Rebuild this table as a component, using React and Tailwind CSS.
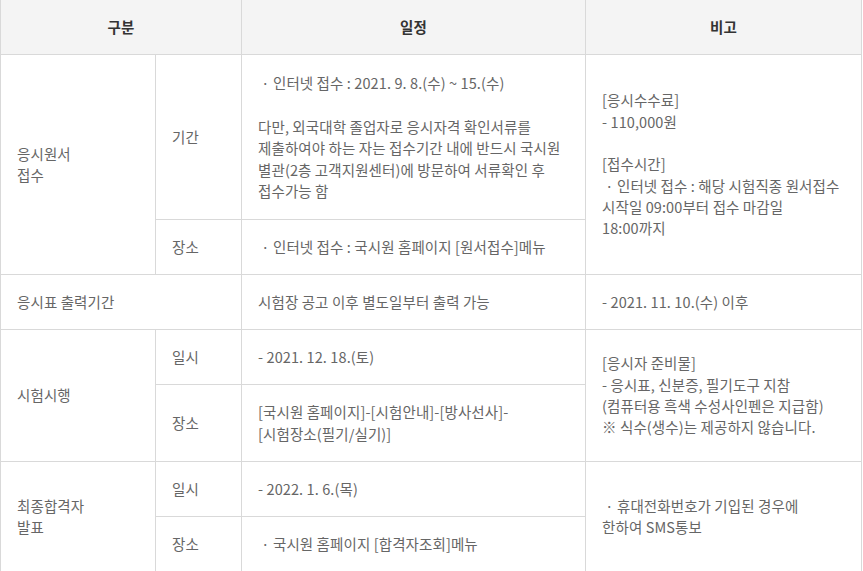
import React from "react";

const td = "border border-[#d9d9d9] px-4 align-middle text-left";

export default function App() {
  return (
    <div
      className="w-[863px] h-[571px] overflow-hidden bg-white text-[14.5px] leading-[21.33px] tracking-[0.1px] text-[#666]"
      style={{ fontFamily: '"Noto Sans CJK KR", "Noto Sans", sans-serif' }}
    >
      <table className="w-[861px] border-collapse table-fixed">
        <colgroup>
          <col className="w-[155px]" />
          <col className="w-[86px]" />
          <col className="w-[344px]" />
          <col className="w-[276px]" />
        </colgroup>
        <thead>
          <tr className="h-[54px] bg-[#f4f4f4]">
            <th colSpan={2} className="border border-[#d9d9d9] border-t-0 font-bold text-[#333] text-center">구분</th>
            <th className="border border-[#d9d9d9] border-t-0 font-bold text-[#333] text-center">일정</th>
            <th className="border border-[#d9d9d9] border-t-0 font-bold text-[#333] text-center">비고</th>
          </tr>
        </thead>
        <tbody>
          <tr className="h-[165px]">
            <td rowSpan={2} className={td}>
              응시원서
              <br />
              접수
            </td>
            <td className={td}>기간</td>
            <td className={td}>
              <p className="mb-[23px]">&nbsp;· 인터넷 접수 : 2021. 9. 8.(수) ~ 15.(수)</p>
              <p className="whitespace-nowrap">
                다만, 외국대학 졸업자로 응시자격 확인서류를
                <br />
                제출하여야 하는 자는 접수기간 내에 반드시 국시원
                <br />
                별관(2층 고객지원센터)에 방문하여 서류확인 후
                <br />
                접수가능 함
              </p>
            </td>
            <td rowSpan={2} className={`${td} whitespace-nowrap`}>
              [응시수수료]
              <br />- 110,000원
              <br />
              <br />
              [접수시간]
              <br />
              &nbsp;· 인터넷 접수 : 해당 시험직종 원서접수
              <br />
              시작일 09:00부터 접수 마감일
              <br />
              18:00까지
            </td>
          </tr>
          <tr className="h-[55px]">
            <td className={td}>장소</td>
            <td className={td}>&nbsp;· 인터넷 접수 : 국시원 홈페이지 [원서접수]메뉴</td>
          </tr>
          <tr className="h-[55px]">
            <td colSpan={2} className={td}>응시표 출력기간</td>
            <td className={td}>시험장 공고 이후 별도일부터 출력 가능</td>
            <td className={td}>- 2021. 11. 10.(수) 이후</td>
          </tr>
          <tr className="h-[55px]">
            <td rowSpan={2} className={td}>시험시행</td>
            <td className={td}>일시</td>
            <td className={td}>- 2021. 12. 18.(토)</td>
            <td rowSpan={2} className={`${td} whitespace-nowrap`}>
              [응시자 준비물]
              <br />- 응시표, 신분증, 필기도구 지참
              <br />
              (컴퓨터용 흑색 수성사인펜은 지급함)
              <br />※ 식수(생수)는 제공하지 않습니다.
            </td>
          </tr>
          <tr className="h-[77px]">
            <td className={td}>장소</td>
            <td className={`${td} whitespace-nowrap`}>
              [국시원 홈페이지]-[시험안내]-[방사선사]-
              <br />
              [시험장소(필기/실기)]
            </td>
          </tr>
          <tr className="h-[55px]">
            <td rowSpan={2} className={td}>
              최종합격자
              <br />
              발표
            </td>
            <td className={td}>일시</td>
            <td className={td}>- 2022. 1. 6.(목)</td>
            <td rowSpan={2} className={`${td} whitespace-nowrap`}>
              &nbsp;· 휴대전화번호가 기입된 경우에
              <br />
              한하여 SMS통보
            </td>
          </tr>
          <tr className="h-[55px]">
            <td className={td}>장소</td>
            <td className={td}>&nbsp;· 국시원 홈페이지 [합격자조회]메뉴</td>
          </tr>
        </tbody>
      </table>
    </div>
  );
}
